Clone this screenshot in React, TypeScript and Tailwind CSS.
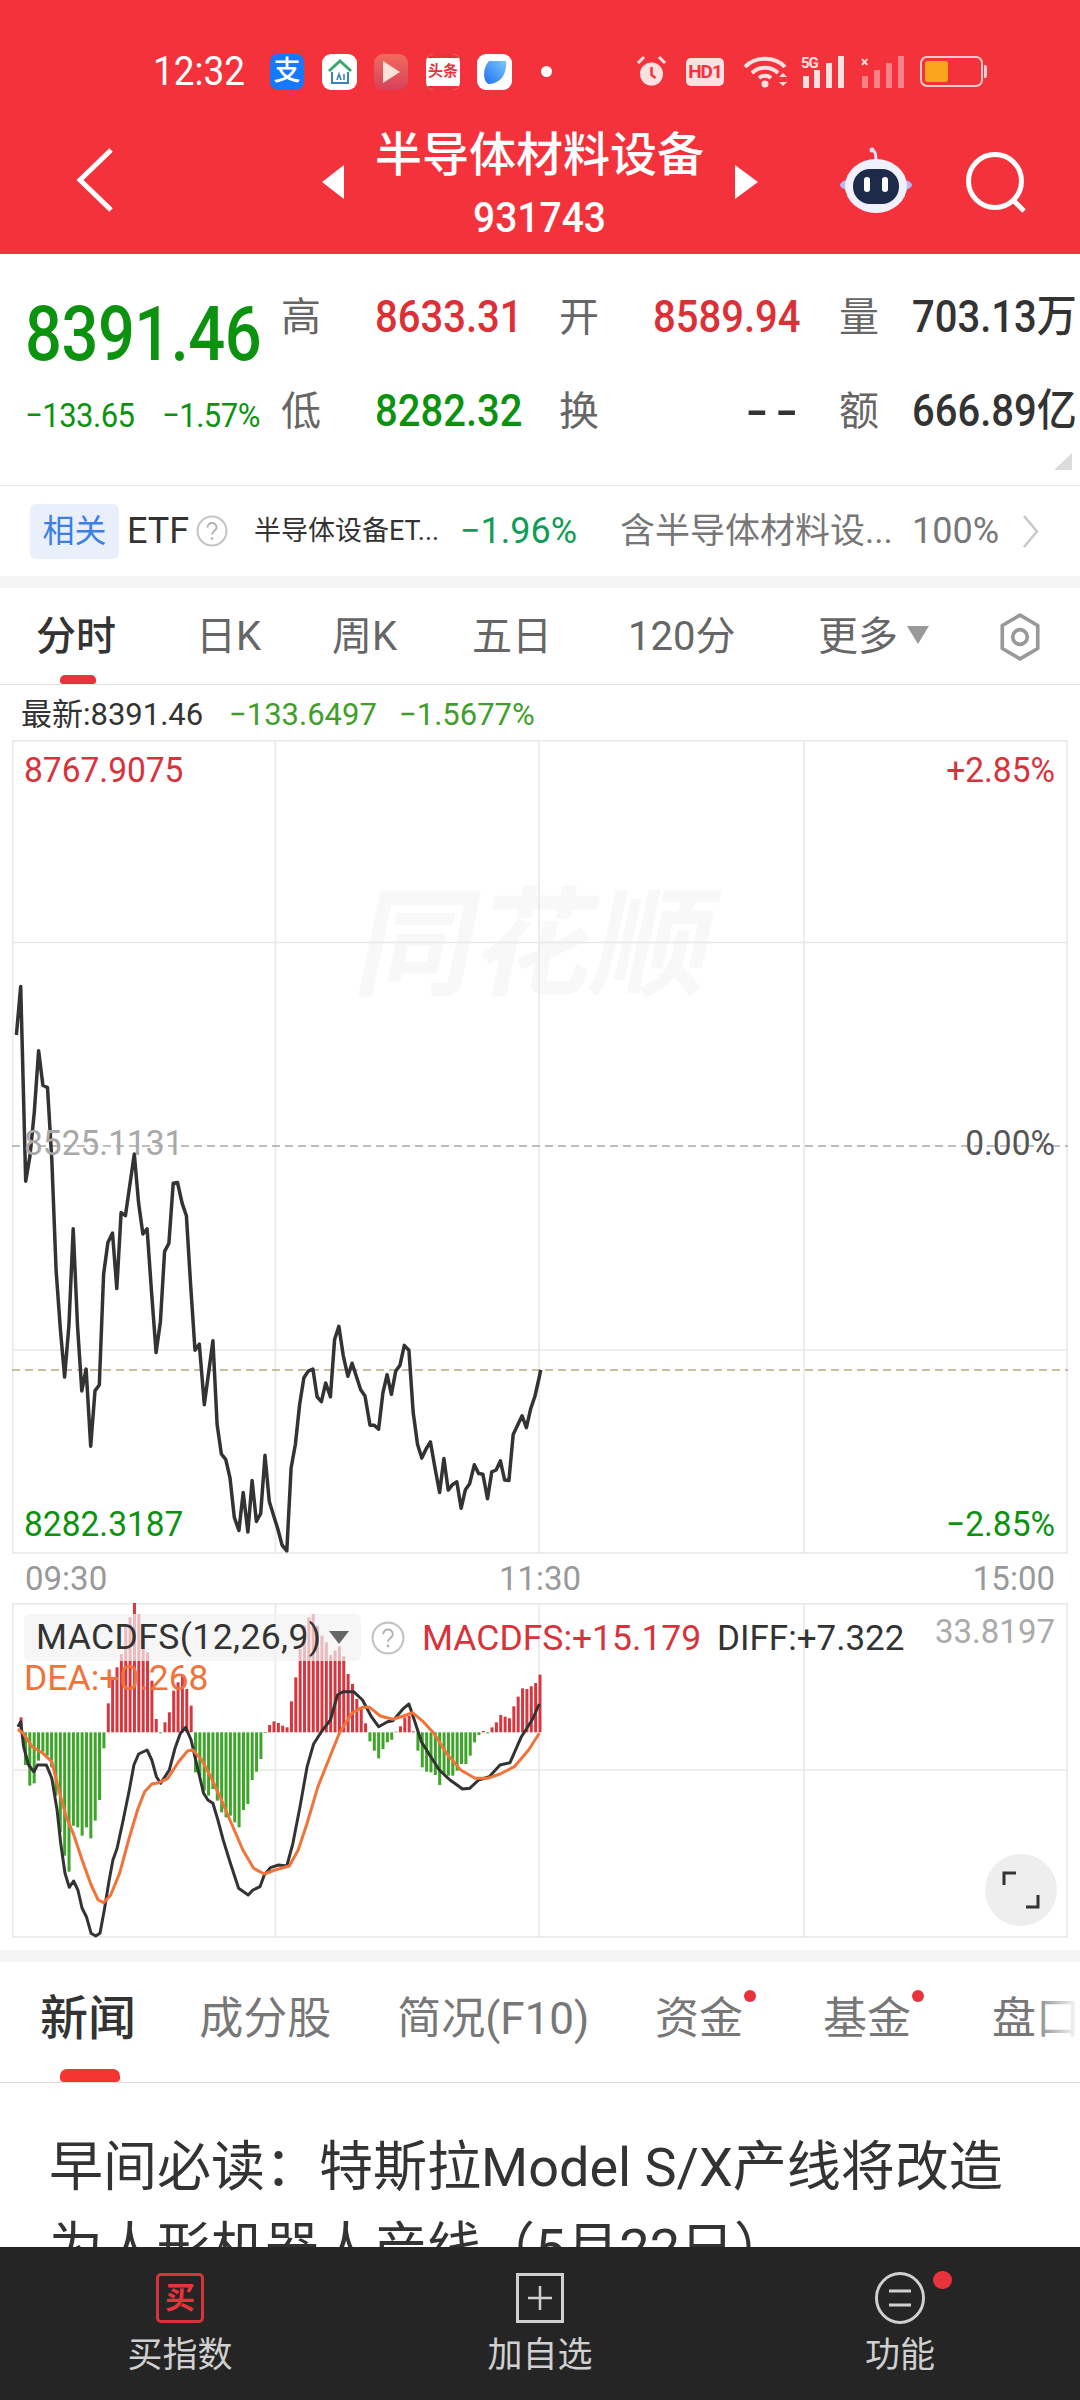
const PRICE: [number, number][] = [
  [46,215],[58,92],[72,585],[84,520],[96,410],[108,255],[120,342],[133,348],[145,530],[157,810],[169,960],[181,1080],[193,950],[205,705],[217,950],[229,1115],[241,1060],[254,1255],[266,1115],[278,1100],[290,820],[302,740],[315,716],[327,856],[339,664],[351,672],[376,516],[388,640],[400,718],[412,705],[424,860],[437,1018],[449,940],[461,762],[473,742],[485,590],[497,588],[510,640],[522,672],[534,850],[546,1012],[558,997],[572,1150],[596,988],[608,1200],[620,1275],[632,1288],[644,1335],[656,1435],[669,1468],[681,1372],[694,1472],[706,1342],[718,1445],[730,1425],[742,1278],[754,1395],[766,1430],[778,1465],[790,1505],[803,1520],[815,1310],[827,1250],[839,1150],[851,1082],[863,1065],[876,1060],[888,1130],[900,1142],[912,1095],[925,1130],[937,985],[949,952],[961,1025],[974,1078],[986,1045],[1010,1112],[1022,1128],[1036,1202],[1048,1202],[1060,1212],[1072,1120],[1084,1074],[1096,1124],[1108,1065],[1120,1050],[1132,1000],[1145,1012],[1157,1170],[1169,1250],[1181,1285],[1193,1262],[1205,1244],[1218,1310],[1231,1372],[1243,1286],[1255,1366],[1267,1352],[1279,1345],[1291,1412],[1303,1365],[1315,1350],[1328,1302],[1340,1324],[1352,1326],[1365,1388],[1377,1320],[1389,1315],[1401,1292],[1413,1340],[1425,1342],[1437,1225],[1450,1200],[1462,1178],[1474,1208],[1486,1160],[1498,1128],[1510,1080],[1514,1062],
];

const BARS = [
  45,
  -98,-160,-153,-85,-58,-70,-105,-190,-300,-370,-418,-280,-285,-310,-285,-318,-265,-203,-48,
  87,160,195,235,315,345,390,355,280,240,155,40,
  -3,
  30,60,125,150,170,130,80,
  -120,-130,-175,-190,-170,-205,-240,-255,-250,-270,-285,-233,-215,-143,-118,-80,-2,
  22,33,28,20,15,93,165,250,320,345,355,320,290,270,232,245,258,228,175,145,100,75,27,
  -27,-55,-78,-50,-30,-22,
  2,18,45,50,3,
  -55,-105,-118,-120,-128,-158,-125,-130,-130,-115,-95,-95,-70,-30,-8,
  4,-3,
  15,30,52,47,42,78,107,132,130,138,148,173,
];

const DIFF: [number, number][] = [
  [50,470],[58,455],[66,530],[80,585],[95,605],[105,585],[130,585],[145,625],[160,720],[170,820],[182,910],[194,952],[206,933],[218,960],[230,1015],[242,1040],[255,1090],[268,1098],[280,1090],[292,1020],[305,935],[316,870],[328,835],[345,750],[362,660],[375,585],[388,552],[412,540],[425,570],[438,620],[450,640],[474,600],[490,535],[505,490],[520,472],[535,510],[548,570],[570,670],[582,690],[596,700],[610,750],[625,810],[645,880],[668,955],[695,975],[708,960],[728,950],[740,915],[757,893],[780,885],[803,888],[820,820],[840,710],[860,590],[878,522],[900,485],[925,450],[945,375],[960,365],[990,365],[1015,390],[1040,440],[1060,470],[1085,455],[1100,452],[1130,415],[1145,402],[1160,450],[1180,515],[1200,550],[1230,600],[1260,630],[1280,645],[1295,657],[1315,655],[1340,630],[1370,620],[1400,585],[1428,578],[1460,500],[1490,450],[1510,402],
];

const DEA: [number, number][] = [
  [50,478],[65,490],[90,530],[120,550],[145,575],[165,660],[185,740],[205,790],[230,870],[255,945],[275,990],[290,998],[310,975],[335,910],[360,810],[385,720],[405,665],[425,642],[445,638],[470,625],[500,575],[525,543],[540,540],[565,570],[590,620],[620,690],[650,765],[680,840],[710,895],[740,912],[770,900],[810,888],[835,840],[860,760],[890,650],[920,570],[950,490],[985,430],[1015,412],[1035,412],[1065,438],[1100,448],[1130,438],[1155,428],[1185,455],[1215,490],[1250,550],[1290,600],[1330,625],[1365,625],[1400,612],[1440,590],[1480,540],[1510,490],
];

const pricePoints = PRICE.map(([x, y]) => `${(x / 2.8 - 12).toFixed(1)},${(950 + y / 2.529 - 740).toFixed(1)}`).join(" ");
const macdPoints = (pts: [number, number][]) => pts.map(([x, y]) => `${(x / 2.8 - 12).toFixed(1)},${(1570 + y / 3 - 1603).toFixed(1)}`).join(" ");

function StatusBar() {
  return (
    <div className="flex h-[142px] items-center pl-[153px] pt-[1px]">
      <span className="w-[117px] scale-y-110 text-[37px] leading-none text-white">12:32</span>
      <div className="flex h-[36px] w-[34px] items-center justify-center rounded-[8px] bg-[#1677ff] text-[27px] font-medium leading-none text-white">支</div>
      <div className="ml-[18px] flex h-[36px] w-[35px] items-center justify-center rounded-[9px] bg-white">
        <svg width="26" height="28" viewBox="0 0 26 28" fill="none">
          <path d="M2 13 13 3l11 10" stroke="#3aa76d" strokeWidth="3" />
          <path d="M5 14v11h16V14" stroke="#3b82c4" strokeWidth="2" />
          <path d="M10 22l2-6 2 6M17 16v6" stroke="#3b82c4" strokeWidth="1.6" />
        </svg>
      </div>
      <div className="ml-[17px] flex h-[36px] w-[34px] items-center justify-center rounded-[9px] bg-gradient-to-b from-[#f26a5c] to-[#d8405a]">
        <svg width="20" height="24" viewBox="0 0 20 24"><path d="M2 1l17 11L2 23z" fill="#fde2d8" /></svg>
      </div>
      <div className="ml-[18px] flex h-[36px] w-[34px] flex-col justify-between overflow-hidden rounded-[8px] bg-white">
        <div className="h-[4px] bg-[#e8323c]" />
        <span className="text-center text-[15px] font-bold leading-none text-[#e8323c]">头条</span>
        <div className="h-[4px] bg-[#e8323c]" />
      </div>
      <div className="ml-[17px] flex h-[36px] w-[35px] items-center justify-center rounded-[9px] bg-white">
        <svg width="26" height="28" viewBox="0 0 26 28">
          <defs>
            <linearGradient id="blueApp" x1="0" y1="1" x2="1" y2="0">
              <stop offset="0" stopColor="#1e6ff0" />
              <stop offset="1" stopColor="#7cc8fb" />
            </linearGradient>
          </defs>
          <path d="M7 3h17c1 10-3 22-17 23C1 25 0 10 7 3z" fill="url(#blueApp)" />
        </svg>
      </div>
      <div className="ml-[29px] size-[11px] rounded-full bg-white" />
      <svg className="ml-[84px]" width="31" height="33" viewBox="0 0 31 33" fill="none">
        <circle cx="15.5" cy="19" r="11.5" fill="#fde0e0" />
        <path d="M15.5 12v8l4 3" stroke="#f3323b" strokeWidth="2.4" />
        <path d="M2 8l6-6M29 8l-6-6" stroke="#fde0e0" strokeWidth="3" />
      </svg>
      <div className="ml-[19px] flex h-[28px] w-[38px] items-center justify-center rounded-[5px] bg-[#fde0e0] text-[19px] font-bold leading-none tracking-[-1px] text-[#f3323b]">HD1</div>
      <svg className="ml-[19px]" width="45" height="32" viewBox="0 0 45 32" fill="none">
        <path d="M2 11C12 0 32 0 42 11" stroke="#fde0e0" strokeWidth="4" />
        <path d="M9 17c7-7 19-7 26 0" stroke="#fde0e0" strokeWidth="4" />
        <path d="M16 22c4-3 9-3 12 0" stroke="#fde0e0" strokeWidth="4" />
        <circle cx="22" cy="28" r="3.5" fill="#fde0e0" />
        <path d="M36 21l4-4 4 4zM36 26l4 4 4-4z" fill="#fde0e0" />
      </svg>
      <div className="relative ml-[13px] h-[32px] w-[46px]">
        <span className="absolute left-0 top-0 text-[15px] font-bold leading-none tracking-[-1px] text-[#fde0e0]">5G</span>
        <svg className="absolute left-0 top-0" width="46" height="32" viewBox="0 0 46 32" fill="#fde0e0">
          <rect x="2" y="20" width="6" height="12" /><rect x="13" y="14" width="6" height="18" /><rect x="25" y="7" width="6" height="25" /><rect x="37" y="0" width="6" height="32" />
        </svg>
      </div>
      <div className="relative ml-[14px] h-[32px] w-[44px]">
        <svg className="absolute left-0 top-0" width="44" height="32" viewBox="0 0 44 32" fill="#f98287">
          <rect x="1" y="20" width="6" height="12" /><rect x="13" y="14" width="6" height="18" /><rect x="25" y="7" width="6" height="25" /><rect x="37" y="0" width="6" height="32" />
        </svg>
        <span className="absolute left-0 top-[-1px] text-[14px] font-bold leading-none text-[#fde0e0]">×</span>
      </div>
      <div className="ml-[15px] flex h-[31px] w-[63px] items-center rounded-[7px] border-2 border-[#fbc9c9] pl-[3px]">
        <div className="h-[21px] w-[23px] rounded-[3px] bg-[#fba51d]" />
      </div>
      <div className="ml-[1px] h-[13px] w-[3px] rounded-r-[2px] bg-[#fbc9c9]" />
    </div>
  );
}

function NavBar() {
  return (
    <div className="flex h-[112px] items-start">
      <svg className="ml-[76px] mt-[6px]" width="38" height="64" viewBox="0 0 38 64" fill="none">
        <path d="M35 2 4 32l31 30" stroke="#fff" strokeWidth="5" />
      </svg>
      <div className="ml-[208px] mt-[23px] size-0 border-y-[17px] border-r-[22px] border-y-transparent border-r-white" />
      <div className="-mt-[14px] flex w-[391px] flex-col items-center">
        <span className="text-[47px] font-medium leading-[54px] text-white">半导体材料设备</span>
        <span className="mt-[13px] scale-y-110 text-[39px] font-medium leading-[46px] text-white">931743</span>
      </div>
      <div className="mt-[23px] size-0 border-y-[17px] border-l-[23px] border-y-transparent border-l-white" />
      <svg className="ml-[82px] mt-[5px]" width="72" height="66" viewBox="0 0 72 66" fill="none">
        <path d="M36 14c0-5 0-8-2-10" stroke="#dfe0fb" strokeWidth="3" />
        <circle cx="32" cy="3" r="2.5" fill="#dfe0fb" />
        <ellipse cx="36" cy="38" rx="36" ry="9" fill="#b9b5f3" />
        <ellipse cx="36" cy="39" rx="31" ry="27" fill="#f1f1fe" />
        <rect x="13" y="22" width="46" height="35" rx="17" fill="#1e2a4a" />
        <rect x="24" y="30" width="6" height="15" rx="3" fill="#fff" />
        <rect x="42" y="30" width="6" height="15" rx="3" fill="#fff" />
      </svg>
      <svg className="ml-[53px] mt-[9px]" width="62" height="62" viewBox="0 0 62 62" fill="none">
        <circle cx="30" cy="30" r="26.5" stroke="#fff" strokeWidth="5" />
        <path d="M48 49l11 11" stroke="#fff" strokeWidth="5" />
      </svg>
    </div>
  );
}

function StatLabel({ children }: { children: string }) {
  return <span className="text-[40px] font-normal leading-none text-[#666]">{children}</span>;
}

function Stats() {
  return (
    <div className="relative flex h-[232px] border-b border-[#e8e8e8] bg-white">
      <div className="w-[281px] pl-[25px]">
        <div className="mt-[42px] origin-left scale-y-[1.16] text-[65px] font-medium leading-[76px] tracking-[-0.5px] text-[#0b930f]">8391.46</div>
        <div className="mt-[26px] flex scale-y-110 text-[31px] leading-[36px] tracking-[-0.5px] text-[#0b930f]">
          <span className="w-[137px]">−133.65</span>
          <span>−1.57%</span>
        </div>
      </div>
      <div className="mt-[17px] grid h-[188px] grid-cols-[94px_184px_94px_186px_73px_168px] grid-rows-2 items-center whitespace-nowrap text-[40px] font-medium leading-none">
        <StatLabel>高</StatLabel>
        <span className="origin-left scale-y-110 text-[#dc3036]">8633.31</span>
        <StatLabel>开</StatLabel>
        <span className="scale-y-110 pr-[39px] text-right text-[#dc3036]">8589.94</span>
        <StatLabel>量</StatLabel>
        <span className="scale-y-110 text-[#333]">703.13万</span>
        <StatLabel>低</StatLabel>
        <span className="scale-y-110 text-[#0b930f]">8282.32</span>
        <StatLabel>换</StatLabel>
        <span className="flex justify-end pr-[34px] text-[#333]"><span className="origin-right scale-x-150 font-bold tracking-[4px]">--</span></span>
        <StatLabel>额</StatLabel>
        <span className="scale-y-110 text-[#333]">666.89亿</span>
      </div>
      <svg className="absolute left-[1054px] top-[199px]" width="18" height="17" viewBox="0 0 18 17"><path d="M18 0v17H0z" fill="#dcdcdc" /></svg>
    </div>
  );
}

function QuestionIcon({ size }: { size: number }) {
  return (
    <svg width={size} height={size} viewBox="0 0 32 32" fill="none">
      <circle cx="16" cy="16" r="14.5" stroke="#c4c4c4" strokeWidth="2" />
      <path d="M11.5 12.5c0-6 9-6 9 0 0 3.500-4.500 3.500-4.500 7" stroke="#b0b0b0" strokeWidth="1.800" />
      <circle cx="16" cy="23.500" r="1.300" fill="#b0b0b0" />
    </svg>
  );
}

function EtfRow() {
  return (
    <div className="flex h-[90px] items-center whitespace-nowrap bg-white pl-[30px]">
      <div className="flex h-[55px] w-[89px] items-center justify-center rounded-[6px] bg-[#e9f0fc] text-[32px] leading-none text-[#3b7fe8]">相关</div>
      <span className="ml-[8px] w-[69px] text-[36px] leading-none text-[#333]">ETF</span>
      <QuestionIcon size={32} />
      <span className="ml-[26px] w-[206px] text-[27px] leading-none text-[#333]">半导体设备ET...</span>
      <span className="w-[160px] text-[36px] leading-none text-[#0f9d58]">−1.96%</span>
      <span className="w-[292px] text-[35px] leading-none text-[#777]">含半导体材料设...</span>
      <span className="w-[110px] text-[36px] leading-none text-[#777]">100%</span>
      <svg width="17" height="33" viewBox="0 0 17 33" fill="none"><path d="M2 1l13 15.500L2 32" stroke="#c8c8c8" strokeWidth="2.500" /></svg>
    </div>
  );
}

function ChartTabs() {
  return (
    <div className="relative flex h-[97px] items-center whitespace-nowrap border-b border-[#e4e4e4] bg-white pl-[36px] pt-[2px] text-[40px] leading-none text-[#666]">
      <span className="w-[160px] font-medium text-[#333]">分时</span>
      <span className="w-[136px]">日K</span>
      <span className="w-[140px]">周K</span>
      <span className="w-[156px]">五日</span>
      <span className="w-[190px]">120分</span>
      <span className="w-[89px]">更多</span>
      <div className="mb-[4px] size-0 border-x-[11px] border-t-[18px] border-x-transparent border-t-[#999]" />
      <svg className="ml-[67px]" width="48" height="48" viewBox="0 0 46 46" fill="none">
        <path d="M23 2l17 10v22L23 44 6 34V12z" stroke="#999" strokeWidth="3.500" strokeLinejoin="round" />
        <circle cx="23" cy="23" r="7" stroke="#999" strokeWidth="3.500" />
      </svg>
      <div className="absolute bottom-0 left-[60px] h-[9px] w-[36px] rounded-t-[5px] rounded-b-[3px] bg-[#e8323c]" />
    </div>
  );
}

function InfoRow() {
  return (
    <div className="flex h-[55px] items-center whitespace-nowrap bg-white pl-[21px] pt-[3px] text-[31px] leading-none">
      <span className="w-[208px] text-[#333]">最新:8391.46</span>
      <span className="w-[170px] text-[#3f9e2c]">−133.6497</span>
      <span className="text-[#3f9e2c]">−1.5677%</span>
    </div>
  );
}

function PriceChart() {
  const label = "absolute scale-y-105 text-[33.5px] leading-none";
  return (
    <div className="relative ml-[12px] h-[814px] w-[1056px] overflow-hidden">
      <span className="absolute left-[348px] top-[147px] -skew-x-12 text-[118px] font-bold leading-none text-[#f8f8f8]">同花顺</span>
      <svg className="absolute left-0 top-0" width="1056" height="814" fill="none">
        <path d="M.75 0v814M263.500 0v814M527 0v814M792 0v814M1055 0v814M0 .75h1056M0 202.500h1056M0 610h1056M0 813h1056" stroke="#e8e8e8" strokeWidth="1.500" />
        <path d="M0 406h1056" stroke="#a8a8a8" strokeWidth="1.500" strokeDasharray="8 5" />
        <path d="M0 630h1056" stroke="#b9ab7d" strokeWidth="1.500" strokeDasharray="8 5" />
        <polyline points={pricePoints} stroke="#333" strokeWidth="3.500" strokeLinejoin="round" />
      </svg>
      <span className={`${label} left-[12px] top-[13px] text-[#d8323a]`}>8767.9075</span>
      <span className={`${label} right-[13px] top-[13px] text-[#d8323a]`}>+2.85%</span>
      <span className={`${label} left-[12px] top-[386px] text-[#a8a8a8]`}>8525.1131</span>
      <span className={`${label} right-[13px] top-[386px] text-[#555]`}>0.00%</span>
      <span className={`${label} left-[12px] top-[767px] text-[#0b930f]`}>8282.3187</span>
      <span className={`${label} right-[13px] top-[767px] text-[#0b930f]`}>−2.85%</span>
    </div>
  );
}

function TimeAxis() {
  return (
    <div className="flex h-[49px] items-center justify-between bg-white px-[25px] text-[33px] leading-none text-[#999]">
      <span>09:30</span>
      <span>11:30</span>
      <span>15:00</span>
    </div>
  );
}

function MacdChart() {
  return (
    <div className="relative ml-[12px] h-[335px] w-[1056px] overflow-hidden">
      <svg className="absolute left-0 top-0" width="1056" height="335" fill="none">
        <path d="M.75 0v335M263.500 0v335M527 0v335M792 0v335M1055 0v335M0 .75h1056M0 167h1056M0 334h1056" stroke="#e8e8e8" strokeWidth="1.500" />
        {BARS.map((v, i) => {
          const x = (59 + i * 12.21) / 2.8 - 12 - 1.5;
          const h = Math.abs(v) / 3;
          const base = 1570 + 487 / 3 - 1603;
          return <rect key={i} x={x} y={v > 0 ? base - h : base} width={3} height={h} fill={v > 0 ? "#d8363f" : "#3ea52a"} />;
        })}
        <polyline points={macdPoints(DIFF)} stroke="#333" strokeWidth="3" strokeLinejoin="round" />
        <polyline points={macdPoints(DEA)} stroke="#f0743a" strokeWidth="3" strokeLinejoin="round" />
      </svg>
      <div className="absolute left-[12px] top-[11px] flex h-[47px] w-[337px] items-center rounded-[6px] bg-[#f2f2f2]/70 pl-[12px] text-[35.500px] leading-none tracking-[0.4px] text-[#333]">
        <span className="w-[293px] whitespace-nowrap">MACDFS(12,26,9)</span>
        <div className="size-0 border-x-[10px] border-t-[13px] border-x-transparent border-t-[#666]" />
      </div>
      <div className="absolute left-[359px] top-[18px]"><QuestionIcon size={34} /></div>
      <span className="absolute left-[410px] top-[18px] whitespace-nowrap text-[35.500px] leading-none text-[#d8323a]">MACDFS:+15.179</span>
      <span className="absolute left-[705px] top-[18px] whitespace-nowrap text-[35px] leading-none text-[#333]">DIFF:+7.322</span>
      <span className="absolute right-[13px] top-[12px] text-[33px] leading-none text-[#aaa]">33.8197</span>
      <span className="absolute left-[12px] top-[58px] whitespace-nowrap text-[35.500px] leading-none text-[#f0743a]">DEA:+0.268</span>
      <div className="absolute left-[973px] top-[251px] flex size-[72px] items-center justify-center rounded-full bg-[#eeeeee]">
        <svg width="38" height="38" viewBox="0 0 38 38" fill="none" stroke="#333" strokeWidth="3">
          <path d="M2 14V2h12M24 36h12V24" />
        </svg>
      </div>
    </div>
  );
}

function NewsTabs() {
  const dot = "absolute right-[-13px] top-[-7px] size-[12px] rounded-full bg-[#e8323c]";
  return (
    <div className="relative flex h-[121px] items-center whitespace-nowrap border-b border-[#d8d8d8] bg-white pb-[6px] pl-[40px] text-[44px] leading-none text-[#777]">
      <span className="w-[160px] text-[48px] font-medium text-[#333]">新闻</span>
      <span className="w-[199px]">成分股</span>
      <span className="w-[259px]">简况(F10)</span>
      <span className="relative mr-[80px]">资金<div className={dot} /></span>
      <span className="relative mr-[81px]">基金<div className={dot} /></span>
      <span>盘口</span>
      <div className="absolute right-0 top-0 h-full w-[50px] bg-gradient-to-r from-white/0 to-white" />
      <div className="absolute bottom-0 left-[60px] h-[13px] w-[60px] rounded-t-[7px] rounded-b-[4px] bg-[#f5352f]" />
    </div>
  );
}

function BottomItem({ icon, label }: { icon: React.ReactNode; label: string }) {
  return (
    <div className="flex w-[360px] flex-col items-center">
      <div className="flex h-[52px] items-center justify-center">{icon}</div>
      <span className="mt-[12px] text-[35px] leading-[40px] text-[#d0d0d0]">{label}</span>
    </div>
  );
}

function BottomBar() {
  return (
    <div className="flex h-[153px] shrink-0 bg-[#252525] pt-[25px]">
      <BottomItem
        label="买指数"
        icon={
          <div className="flex h-[50px] w-[48px] items-center justify-center rounded-[5px] border-[3px] border-[#d8323a] text-[30px] font-bold leading-none text-[#e8323c]">买</div>
        }
      />
      <BottomItem
        label="加自选"
        icon={
          <svg width="48" height="50" viewBox="0 0 48 50" fill="none" stroke="#d0d0d0">
            <rect x="1.500" y="1.500" width="45" height="47" strokeWidth="3" />
            <path d="M24 13v24M12 25h24" strokeWidth="2.500" />
          </svg>
        }
      />
      <BottomItem
        label="功能"
        icon={
          <div className="relative">
            <svg width="50" height="52" viewBox="0 0 50 52" fill="none" stroke="#d0d0d0">
              <ellipse cx="25" cy="26" rx="23.500" ry="24.500" strokeWidth="3" />
              <path d="M14 19h22M14 33h22" strokeWidth="3" />
            </svg>
            <div className="absolute left-[58px] top-[-1px] h-[18px] w-[19px] rounded-full bg-[#e8323c]" />
          </div>
        }
      />
    </div>
  );
}

export default function App() {
  return (
    <div className="flex h-[2400px] w-[1080px] flex-col overflow-hidden bg-white font-['Roboto','Noto_Sans_CJK_SC',sans-serif]">
      <div className="h-[254px] shrink-0 bg-[#f3323b]">
        <StatusBar />
        <NavBar />
      </div>
      <Stats />
      <EtfRow />
      <div className="h-[12px] shrink-0 bg-[#f5f5f5]" />
      <ChartTabs />
      <InfoRow />
      <PriceChart />
      <TimeAxis />
      <MacdChart />
      <div className="h-[12px] shrink-0" />
      <div className="h-[12px] shrink-0 bg-[#f5f5f5]" />
      <NewsTabs />
      <div className="min-h-0 flex-1 overflow-hidden pl-[49px] pr-[40px] pt-[44px] text-[54px] leading-[81px] text-[#333]">
        早间必读：特斯拉Model S/X产线将改造为人形机器人产线（5月22日）
      </div>
      <BottomBar />
    </div>
  );
}
